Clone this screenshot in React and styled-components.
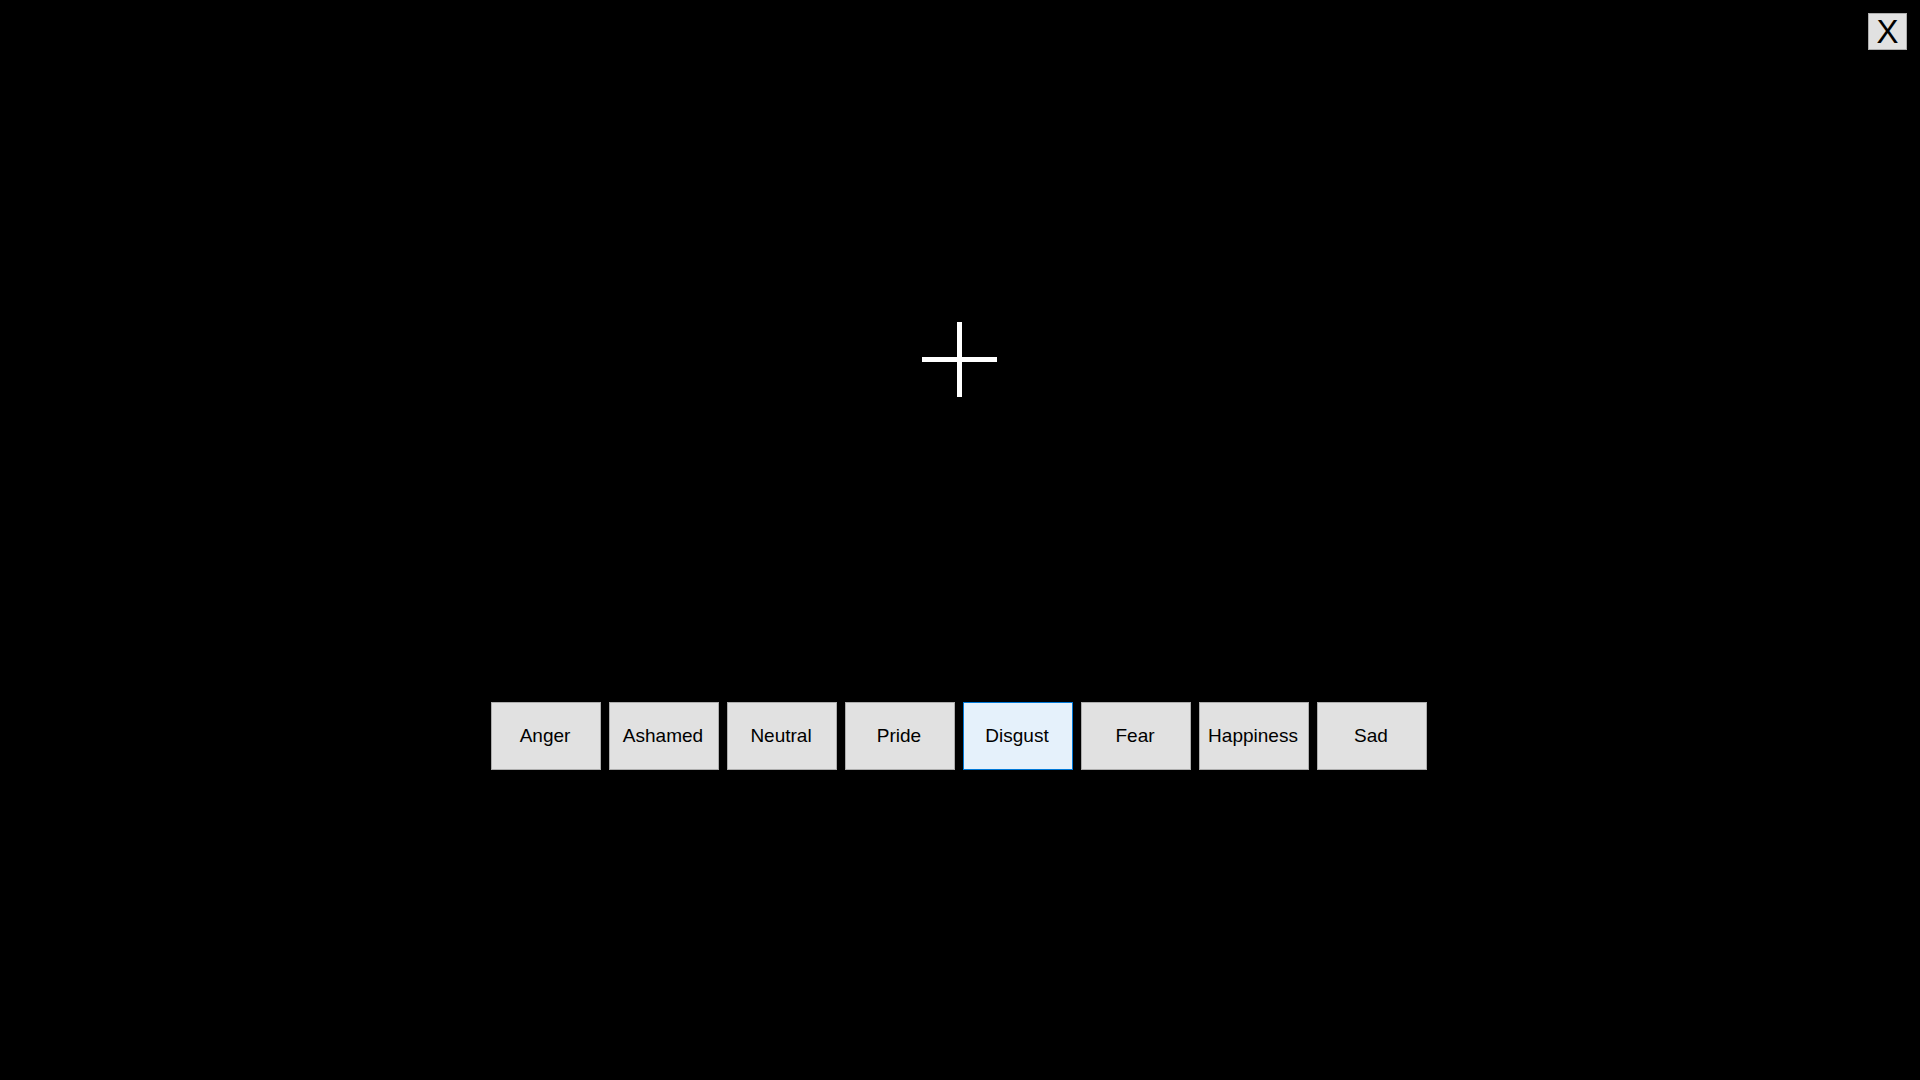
import styled, { createGlobalStyle } from "styled-components";

const GlobalStyle = createGlobalStyle`
  html, body {
    margin: 0;
    padding: 0;
    background: #000;
  }
  body {
    font-family: "Liberation Sans", Arial, sans-serif;
  }
`;

const Screen = styled.div`
  width: 100vw;
  height: 100vh;
  background: #000;
  display: flex;
  flex-direction: column;
  align-items: center;
  overflow: hidden;
`;

const TopBar = styled.div`
  width: 100%;
  display: flex;
  justify-content: flex-end;
  padding: 13px 13px 0 0;
  box-sizing: border-box;
`;

const CloseButton = styled.button`
  width: 39px;
  height: 37px;
  padding: 0;
  background: #e1e1e1;
  border: 1px solid #adadad;
  color: #000;
  font-family: "Liberation Sans", Arial, sans-serif;
  font-size: 33px;
  line-height: 35px;
  cursor: pointer;
`;

const Fixation = styled.svg`
  display: block;
  margin-top: 272px;
  margin-left: -1px;
`;

const ChoiceRow = styled.div`
  display: flex;
  gap: 8px;
  margin-top: 305px;
  margin-left: -2px;
`;

const Choice = styled.button`
  width: 110px;
  height: 68px;
  padding: 0 2px 0 0;
  box-sizing: border-box;
  background: ${(p) => (p.$focused ? "#e5f1fb" : "#e1e1e1")};
  border: 1px solid ${(p) => (p.$focused ? "#0078d7" : "#adadad")};
  color: #000;
  font-family: "Liberation Sans", Arial, sans-serif;
  font-size: 19px;
  cursor: pointer;
`;

const emotions = ["Anger", "Ashamed", "Neutral", "Pride", "Disgust", "Fear", "Happiness", "Sad"];

export default function App() {
  return (
    <>
      <GlobalStyle />
      <Screen>
        <TopBar>
          <CloseButton>X</CloseButton>
        </TopBar>
        <Fixation width="75" height="75" viewBox="0 0 75 75">
          <rect x="35" y="0" width="5" height="75" fill="#fff" />
          <rect x="0" y="35" width="75" height="5" fill="#fff" />
        </Fixation>
        <ChoiceRow>
          {emotions.map((e) => (
            <Choice key={e} $focused={e === "Disgust"}>
              {e}
            </Choice>
          ))}
        </ChoiceRow>
      </Screen>
    </>
  );
}
